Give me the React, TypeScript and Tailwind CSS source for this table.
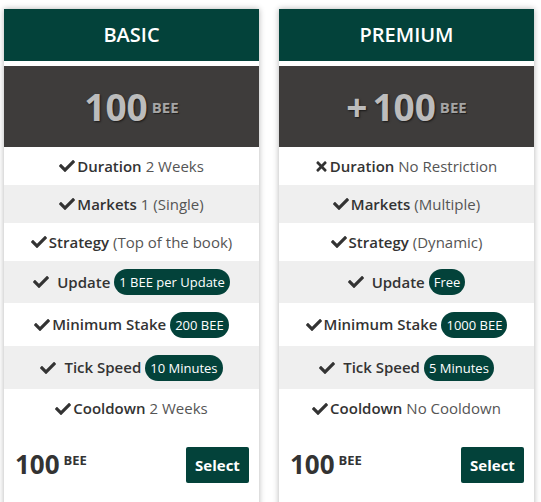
import React from "react";
import { FaCheck, FaTimes } from "react-icons/fa";

type Row = {
  label: string;
  value?: string;
  badge?: string;
  cross?: boolean;
  spaced?: boolean;
  h: string;
};

type Plan = {
  name: string;
  plus?: boolean;
  rows: Row[];
};

const plans: Plan[] = [
  {
    name: "BASIC",
    rows: [
      { label: "Duration", value: "2 Weeks", h: "h-[38px]" },
      { label: "Markets", value: "1 (Single)", h: "h-[38px]" },
      { label: "Strategy", value: "(Top of the book)", h: "h-[38px]" },
      { label: "Update", badge: "1 BEE per Update", spaced: true, h: "h-[42px]" },
      { label: "Minimum Stake", badge: "200 BEE", h: "h-[43px]" },
      { label: "Tick Speed", badge: "10 Minutes", spaced: true, h: "h-[43px]" },
      { label: "Cooldown", value: "2 Weeks", h: "h-[39px]" },
    ],
  },
  {
    name: "PREMIUM",
    plus: true,
    rows: [
      { label: "Duration", value: "No Restriction", cross: true, h: "h-[38px]" },
      { label: "Markets", value: "(Multiple)", h: "h-[38px]" },
      { label: "Strategy", value: "(Dynamic)", h: "h-[38px]" },
      { label: "Update", badge: "Free", spaced: true, h: "h-[42px]" },
      { label: "Minimum Stake", badge: "1000 BEE", h: "h-[43px]" },
      { label: "Tick Speed", badge: "5 Minutes", spaced: true, h: "h-[43px]" },
      { label: "Cooldown", value: "No Cooldown", h: "h-[39px]" },
    ],
  },
];

const Card: React.FC<{ plan: Plan }> = ({ plan }) => (
  <div className="w-[255px] bg-white shadow-[0_0_6px_rgba(0,0,0,0.3)] flex flex-col">
    <div className="h-[52px] bg-[#03423a] flex items-center justify-center text-white text-[20px] font-semibold">
      {plan.name}
    </div>
    <div className="h-[5px] bg-white" />
    <div className="h-[81px] bg-[#3e3c3b] flex items-center justify-center">
      <span className="text-[37px] font-bold text-[#bcbcbc] leading-none [text-shadow:1px_1px_2px_rgba(0,0,0,0.6)]">
        {plan.plus && <span className="mr-[5px]">+</span>}
        100
        <span className="ml-[4px] align-[8px] text-[15px] text-[#a5a5a5] [text-shadow:1px_1px_1px_rgba(0,0,0,0.5)]">
          BEE
        </span>
      </span>
    </div>
    {plan.rows.map((r, i) => (
      <div
        key={r.label}
        className={`${r.h} flex items-center justify-center text-[15px] text-[#333] ${
          i % 2 === 1 ? "bg-[#efefef]" : "bg-white"
        }`}
      >
        {r.cross ? (
          <FaTimes className="text-[#333] w-[11px] h-[15px] mr-[3px]" />
        ) : (
          <FaCheck className={`text-[#333] w-[16px] h-[16px] ${r.spaced ? "mr-[8px]" : "mr-[2px]"}`} />
        )}
        <span className="font-semibold">{r.label}</span>
        {r.value && <span className="ml-[4px] text-[#555]">{r.value}</span>}
        {r.badge && (
          <span className="ml-[4px] rounded-full bg-[#03423a] text-white text-[13px] px-[5px] py-[4px] leading-[18px]">
            {r.badge}
          </span>
        )}
      </div>
    ))}
    <div className="h-[80px] flex items-center justify-between pl-[11px] pr-[10px] pb-[6px]">
      <div className="text-[#333] font-bold">
        <span className="text-[26px] leading-none">100</span>
        <span className="ml-[4px] align-[9px] text-[13px] leading-none">BEE</span>
      </div>
      <button className="w-[63px] h-[36px] bg-[#03423a] text-white text-[15px] font-bold rounded-[2px]">
        Select
      </button>
    </div>
  </div>
);

export default function App() {
  return (
    <div className="min-h-[502px] bg-white pt-[9px] pl-[4px] flex gap-[20px] font-['Open_Sans',sans-serif]">
      {plans.map((p) => (
        <Card key={p.name} plan={p} />
      ))}
    </div>
  );
}
